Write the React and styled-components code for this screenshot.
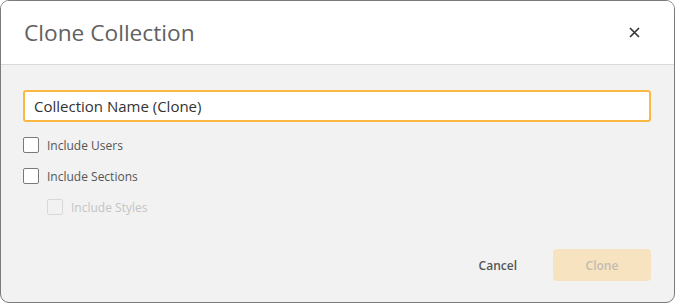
import React from "react";
import styled, { createGlobalStyle } from "styled-components";

const GlobalStyle = createGlobalStyle`
  html, body {
    margin: 0;
    padding: 0;
    background: #ffffff;
  }
  body {
    font-family: "Open Sans", "Noto Sans", sans-serif;
  }
`;

const Dialog = styled.div`
  box-sizing: border-box;
  width: 675px;
  height: 303px;
  border: 1px solid #7b7b7b;
  border-radius: 9px;
  overflow: hidden;
  display: flex;
  flex-direction: column;
  background: #f2f2f2;
`;

const Header = styled.div`
  height: 63px;
  flex-shrink: 0;
  display: flex;
  align-items: center;
  justify-content: space-between;
  padding: 0 34px 0 23px;
  background: #ffffff;
  border-bottom: 1px solid #d9d9d9;
`;

const Title = styled.h2`
  margin: 0;
  font-size: 22.7px;
  font-weight: 400;
  color: #616161;
`;

const CloseButton = styled.button`
  border: none;
  background: transparent;
  padding: 0;
  width: 11px;
  height: 11px;
  display: flex;
  align-items: center;
  justify-content: center;
  cursor: pointer;
`;

const Body = styled.div`
  flex: 1;
  display: flex;
  flex-direction: column;
  padding: 25px 23px 0 22px;
`;

const NameInput = styled.input`
  box-sizing: border-box;
  width: 100%;
  height: 32px;
  border: 2px solid #fbb843;
  border-radius: 3px;
  padding: 0 9px;
  font-family: inherit;
  font-size: 15px;
  color: #333333;
  background: #ffffff;
  outline: none;
`;

const Options = styled.div`
  display: flex;
  flex-direction: column;
  gap: 15px;
  margin-top: 15px;
`;

const OptionRow = styled.label`
  display: flex;
  align-items: center;
  gap: 8px;
  height: 16px;
  padding-left: ${(p) => (p.$indent ? "24px" : "0")};
  font-size: 12px;
  color: ${(p) => (p.$disabled ? "#c4c4c4" : "#555555")};
  cursor: ${(p) => (p.$disabled ? "default" : "pointer")};
`;

const Box = styled.span`
  box-sizing: border-box;
  width: 16px;
  height: 16px;
  border: 1px solid ${(p) => (p.$disabled ? "#d8d8d8" : "#7a7a7a")};
  border-radius: 2px;
  background: ${(p) => (p.$disabled ? "#f2f2f2" : "#ffffff")};
`;

const Footer = styled.div`
  margin-top: auto;
  display: flex;
  justify-content: flex-end;
  align-items: center;
  gap: 36px;
  padding-bottom: 21px;
`;

const TextButton = styled.button`
  border: none;
  background: transparent;
  font-family: inherit;
  font-size: 12px;
  font-weight: 600;
  color: #555555;
  padding: 0;
  cursor: pointer;
`;

const PrimaryButton = styled.button`
  width: 98px;
  height: 32px;
  border: none;
  border-radius: 4px;
  background: #f7e3c0;
  color: #c2bcb2;
  font-family: inherit;
  font-size: 12px;
  font-weight: 600;
  cursor: default;
`;

const Option = ({ label, indent, disabled }) => (
  <OptionRow $indent={indent} $disabled={disabled}>
    <Box $disabled={disabled} />
    {label}
  </OptionRow>
);

const App = () => {
  return (
    <>
      <GlobalStyle />
      <Dialog>
        <Header>
          <Title>Clone Collection</Title>
          <CloseButton aria-label="Close">
            <svg width="11" height="11" viewBox="0 0 11 11">
              <path d="M1 1 L10 10 M10 1 L1 10" stroke="#333" strokeWidth="1.6" />
            </svg>
          </CloseButton>
        </Header>
        <Body>
          <NameInput defaultValue="Collection Name (Clone)" />
          <Options>
            <Option label="Include Users" />
            <Option label="Include Sections" />
            <Option label="Include Styles" indent disabled />
          </Options>
          <Footer>
            <TextButton>Cancel</TextButton>
            <PrimaryButton disabled>Clone</PrimaryButton>
          </Footer>
        </Body>
      </Dialog>
    </>
  );
};

export default App;
